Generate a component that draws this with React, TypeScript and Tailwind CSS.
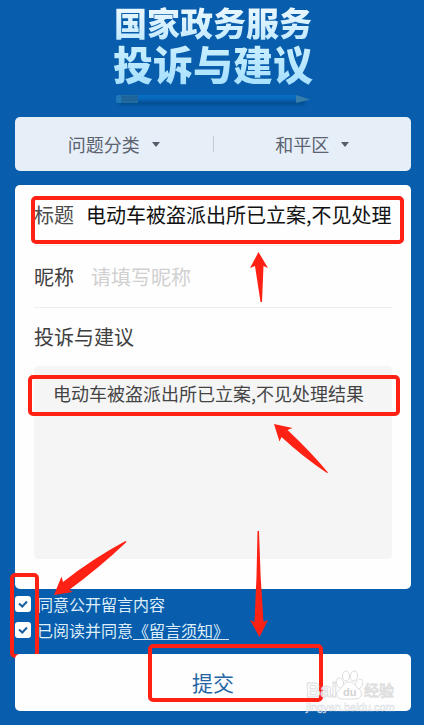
import { useState, type FormEvent } from "react";
import clsx from "clsx";

const categories = ["问题分类"];
const districts = ["和平区"];

export default function App() {
  const [title, setTitle] = useState("电动车被盗派出所已立案,不见处理");
  const [nickname, setNickname] = useState("");
  const [content, setContent] = useState("电动车被盗派出所已立案,不见处理结果");

  const submit = (event: FormEvent<HTMLFormElement>) => {
    event.preventDefault();
  };

  return (
    <main className="min-h-screen overflow-hidden bg-[#085dac] pr-[13px] pb-[14px] pl-[15px] font-['Noto_Sans_CJK_SC',sans-serif]">
      <header className="flex flex-col items-center pt-[3px]">
        <h1 className="flex flex-col items-center">
          <span className="bg-linear-to-b from-[#f0f9ff] to-[#c2eaff] bg-clip-text text-[33px] leading-[38px] font-black text-transparent">
            国家政务服务
          </span>
          <span className="bg-linear-to-b from-[#cdf0ff] to-[#a6e0ff] bg-clip-text text-[40px] leading-[44px] font-black text-transparent">
            投诉与建议
          </span>
        </h1>
        <Pencil />
      </header>

      <form onSubmit={submit}>
        <div className="mt-[10px] flex h-[54px] items-center rounded-[5px] bg-[#e6eef7] text-[#5c6370]">
          <Picker label="问题分类" options={categories} />
          <span className="h-4 w-px bg-[#c3cad4]" />
          <Picker label="所在地区" options={districts} />
        </div>

        <section className="mt-[14px] rounded-[5px] bg-[#fefefe] px-[19px] pb-[30px] text-xl">
          <div className="relative flex h-[61px] items-center border-b border-[#f2f2f2]">
            <label htmlFor="title" className="shrink-0 text-[#4b4b4b]">标题</label>
            <input
              id="title"
              className="ml-3 w-full min-w-0 text-[#111] outline-none"
              value={title}
              onChange={(event) => setTitle(event.target.value)}
            />
            <Marker className="top-[11px] -right-3 -left-[3px] h-12" />
            <svg className="pointer-events-none absolute top-[67px] left-[216px] h-[50px] w-[18px] fill-[#ff2114]" viewBox="0 0 18 50" aria-hidden="true">
              <path d="M8.5 0 18 16 13.5 14 12 50H10.5L5 14 0 16Z" />
            </svg>
          </div>

          <div className="flex h-[62px] items-center border-b border-[#ebeff1]">
            <label htmlFor="nickname" className="shrink-0 text-[#404040]">昵称</label>
            <input
              id="nickname"
              className="ml-[17px] w-full min-w-0 text-[#333] outline-none placeholder:text-[#d0d0d0]"
              placeholder="请填写昵称"
              value={nickname}
              onChange={(event) => setNickname(event.target.value)}
            />
          </div>

          <label htmlFor="content" className="flex h-[58px] items-center text-[#404040]">投诉与建议</label>
          <div className="relative">
            <textarea
              id="content"
              className="block h-[193px] w-full resize-none rounded-[4px] bg-[#f5f5f5] py-[13px] pr-3 pl-[19px] text-lg leading-7 text-[#444] outline-none"
              value={content}
              onChange={(event) => setContent(event.target.value)}
            />
            <Marker className="top-[9px] -right-[8px] -left-[6px] h-[41px]" />
            <svg className="pointer-events-none absolute top-[58px] left-[240px] h-[50px] w-[54px] fill-[#ff2114]" viewBox="0 0 54 50" aria-hidden="true">
              <path d="M0 0 18.5 4 13.5 6 Q36 27 54 48.5 L53 49 Q29 33 7.5 13 L5.5 17.5Z" />
            </svg>
          </div>
        </section>

        <div className="relative flex flex-col items-start pt-[2px] text-base text-[#deeefa]">
          <label className="flex h-[26px] items-center gap-[6px]">
            <Tick />
            同意公开留言内容
          </label>
          <div className="flex h-[26px] items-center gap-[6px]">
            <Tick id="notice" />
            <span className="flex leading-5">
              <label htmlFor="notice">已阅读并同意</label>
              <a href="#notice" className="h-5 border-b border-[#cfe4f5]">《留言须知》</a>
            </span>
          </div>
          <Marker className="-top-4 -left-[5px] h-[85px] w-[29px]" />
          <svg className="pointer-events-none absolute -top-12 left-[39px] h-[55px] w-[73px] fill-[#ff2114]" viewBox="0 0 73 55" aria-hidden="true">
            <path d="M0 54 7.5 35.5 9 41 Q38 18 71.5 0 L72.5 1 Q45 27 15 49 L19 51Z" />
          </svg>
          <svg className="pointer-events-none absolute -top-[58px] left-[235px] h-[107px] w-[18px] fill-[#ff2114]" viewBox="0 0 18 107" aria-hidden="true">
            <path d="M7.5 0H9Q10 45 13.5 91L18 89 9.5 106 0 89 4.5 91Q7 45 7.5 0Z" />
          </svg>
        </div>

        <div className="relative mt-[11px]">
          <button type="submit" className="h-[57px] w-full rounded-[5px] bg-[#fefefe] text-[21px] text-[#2565a4]">
            提交
          </button>
          <Marker className="-top-[10px] left-[133px] h-[58px] w-[175px]" />
          <Watermark />
        </div>
      </form>
    </main>
  );
}

function Picker({ label, options }: { label: string; options: string[] }) {
  return (
    <div className="flex flex-1 items-center justify-center gap-3">
      <select aria-label={label} className="appearance-none bg-transparent text-[18px] outline-none">
        {options.map((option) => (
          <option key={option}>{option}</option>
        ))}
      </select>
      <svg className="h-[5px] w-2 fill-[#565d69]" viewBox="0 0 8 5" aria-hidden="true">
        <path d="M0 0H8L4 5Z" />
      </svg>
    </div>
  );
}

function Tick({ id }: { id?: string }) {
  return (
    <span className="grid size-4 shrink-0">
      <input
        id={id}
        type="checkbox"
        defaultChecked
        className="peer col-start-1 row-start-1 size-4 appearance-none rounded-[3px] bg-white"
      />
      <svg
        className="pointer-events-none invisible col-start-1 row-start-1 size-4 fill-none stroke-[#175f9f] stroke-2 peer-checked:visible"
        viewBox="0 0 16 16"
        aria-hidden="true"
      >
        <path d="M4 7.5 7.3 10.5 12 5.5" />
      </svg>
    </span>
  );
}

// hand-drawn highlight around a field
function Marker({ className }: { className: string }) {
  return <span className={clsx("pointer-events-none absolute rounded-[5px] border-4 border-[#ff2114]", className)} />;
}

function Pencil() {
  return (
    <svg className="mt-[6px] h-4 w-[200px]" viewBox="0 0 200 16" aria-hidden="true">
      <defs>
        <linearGradient id="pencil-body" x1="0" y1="0" x2="0" y2="1">
          <stop offset="0" stopColor="#0870c6" />
          <stop offset="0.5" stopColor="#0566bb" />
          <stop offset="1" stopColor="#044c91" />
        </linearGradient>
        <filter id="pencil-shadow" x="-5%" y="-100%" width="110%" height="300%">
          <feGaussianBlur stdDeviation="1.5" />
        </filter>
      </defs>
      <rect x="6" y="9" width="186" height="5" fill="#044783" opacity="0.7" filter="url(#pencil-shadow)" />
      <rect x="3" y="4" width="8" height="8" rx="2" fill="#1f79b9" />
      <rect x="8" y="4" width="18" height="8" fill="#236aa0" />
      <path d="M9 6H25M9 9H25" stroke="#1b5c91" />
      <rect x="25" y="4" width="158" height="8" fill="url(#pencil-body)" />
      <path d="M183 4 197 8.5 183 12Z" fill="#377eaa" />
    </svg>
  );
}

function Watermark() {
  return (
    <svg
      className="pointer-events-none absolute top-[14px] right-[14px] h-[48px] w-[92px] font-['Liberation_Sans','Noto_Sans_CJK_SC',sans-serif]"
      viewBox="0 0 92 48"
      aria-hidden="true"
    >
      <g fill="#fff" fillOpacity="0.8" stroke="#dedede">
        <text x="1" y="29" fontSize="20" fontWeight="700">Bai</text>
        <ellipse cx="35" cy="15" rx="3.5" ry="5" transform="rotate(-18 35 15)" />
        <ellipse cx="41" cy="8" rx="3.5" ry="5" />
        <ellipse cx="49" cy="8" rx="3.5" ry="5" transform="rotate(10 49 8)" />
        <ellipse cx="54" cy="16" rx="3.5" ry="5" transform="rotate(20 54 16)" />
        <path d="M44 14C39 14 38 19 34 22C30 25 32 31 37 31C41 31 48 31 51 31C57 31 58 24 54 21C50 18 49 14 44 14Z" />
        <text x="59" y="28" fontSize="15" fontWeight="400">经验</text>
      </g>
      <text x="38" y="28" fontSize="11" fontWeight="700" fill="#d2d2d2">du</text>
      <text x="1" y="43" fontSize="11" fill="#fff" fillOpacity="0.5" stroke="#d8dde2" strokeWidth="0.5">jingyan.baidu.com</text>
    </svg>
  );
}
